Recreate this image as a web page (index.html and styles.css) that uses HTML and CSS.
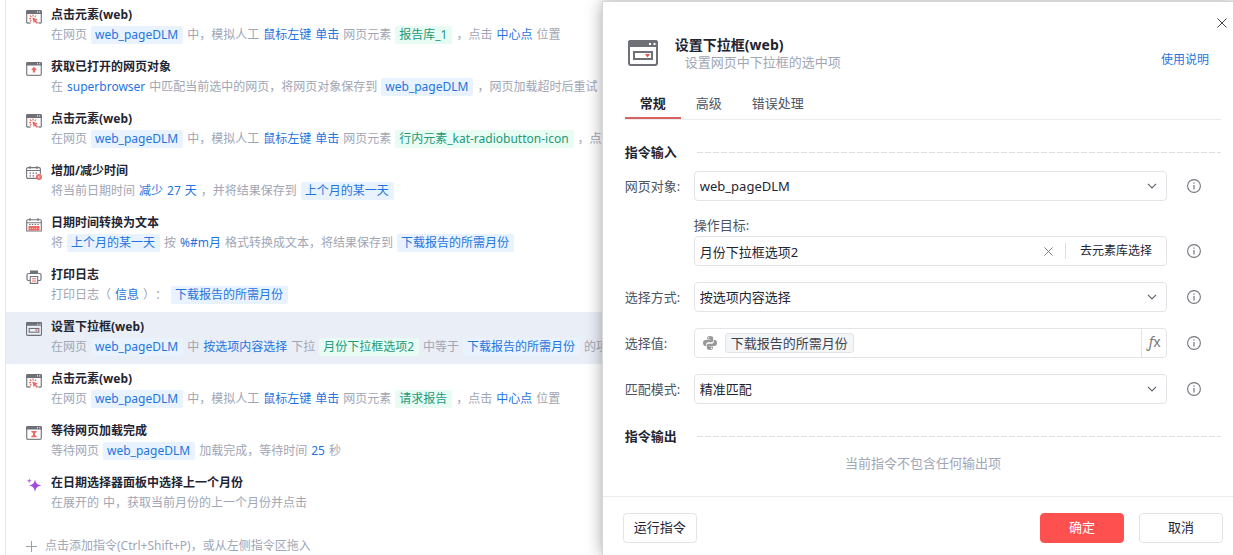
FILE: index.html
```
<!DOCTYPE html>
<html lang="zh-CN">
<head>
    <meta charset="UTF-8">
    <meta name="viewport" content="width=device-width, initial-scale=1.0">
    <title>设置下拉框(web)</title>
    <link rel="stylesheet" href="styles.css">
</head>
<body>

    <!-- 图标 -->
    <svg class="sprite" aria-hidden="true">
        <symbol id="i-click" viewBox="0 0 16 14">
            <path d="M.7 13V1.7a1 1 0 0 1 1-1h12.6a1 1 0 0 1 1 1V13M.7 13h3.8M12.5 13h2.8" fill="none" stroke="#85858c" stroke-width="1.3"/>
            <path d="M0 4V1.5A1.5 1.5 0 0 1 1.5 0h13A1.5 1.5 0 0 1 16 1.5V4z" fill="#6f6f77"/>
            <path d="M11 1.3h1v1.2h-1zM13.2 1.3h1v1.2h-1z" fill="#fff"/>
            <path d="M7 4.5v2M4 5.5l1.4 1.5M3 8.7h2M4 11.5l1.3-1.3M10 5.5L8.8 7" fill="none" stroke="#ec6a66" stroke-width="1.2"/>
            <path d="M6.3 7.5l5.6 2-2 1 2.2 2.3-1.2 1.1-2.1-2.3-1 1.9z" fill="#ec6a66"/>
        </symbol>
        <symbol id="i-fetch" viewBox="0 0 16 14">
            <rect x=".7" y=".7" width="14.6" height="12.6" rx="1.2" fill="#fff" stroke="#85858c" stroke-width="1.3"/>
            <path d="M0 3.5v-2A1.5 1.5 0 0 1 1.5 0h13A1.5 1.5 0 0 1 16 1.5v2z" fill="#6f6f77"/>
            <path d="M11 1.2h1v1.1h-1zM13.2 1.2h1v1.1h-1z" fill="#fff"/>
            <path d="M8 4.8l3 3.2H9.2v2.5H6.8V8H5z" fill="#ec6a66"/>
        </symbol>
        <symbol id="i-wait" viewBox="0 0 16 14">
            <rect x=".7" y=".7" width="14.6" height="12.6" rx="1.2" fill="#fff" stroke="#85858c" stroke-width="1.3"/>
            <path d="M0 3.5v-2A1.5 1.5 0 0 1 1.5 0h13A1.5 1.5 0 0 1 16 1.5v2z" fill="#6f6f77"/>
            <path d="M11 1.2h1v1.1h-1zM13.2 1.2h1v1.1h-1z" fill="#fff"/>
            <path d="M5.3 5h5.4v1.2H9.8L8.8 8l1 2h.9v1.3H5.3V10h.9l1-2-1-1.8h-.9z" fill="#ec6a66"/>
        </symbol>
        <symbol id="i-select" viewBox="0 0 30 26">
            <rect x="1" y="1" width="28" height="24" rx="2" fill="none" stroke="#6f6f77" stroke-width="2"/>
            <path d="M0 7V2.5A2.5 2.5 0 0 1 2.5 0h25A2.5 2.5 0 0 1 30 2.5V7z" fill="#6f6f77"/>
            <path d="M21 3h2v2h-2zM25.5 3h2v2h-2z" fill="#fff"/>
            <rect x="6" y="12" width="18" height="7" fill="none" stroke="#6f6f77" stroke-width="2"/>
            <path d="M17 14h5l-2.5 3.500z" fill="#e05555"/>
        </symbol>
        <symbol id="i-date-add" viewBox="0 0 16 14">
            <path d="M11 12.4H2A1.4 1.4 0 0 1 .6 11V3A1.4 1.4 0 0 1 2 1.6h11A1.4 1.4 0 0 1 14.4 3v5M.6 4.5h13.800M4 0v3M11 0v3" fill="none" stroke="#75757c" stroke-width="1.1"/>
            <path d="M3.5 7.200H12M3.500 9.800h6" stroke="#75757c" stroke-width="1.3" stroke-dasharray="1.5 1.5"/>
            <circle cx="13" cy="11" r="3" fill="#ec6a66"/>
            <path d="M11.5 11h3M13 9.500v3" stroke="#fbc8c6" stroke-width=".8"/>
        </symbol>
        <symbol id="i-date-text" viewBox="0 0 16 14">
            <path d="M.7 13V2.8a1 1 0 0 1 1-1h12.6a1 1 0 0 1 1 1V13zM.7 4.800h14.600M4 0v3M12 0v3" fill="none" stroke="#75757c" stroke-width="1.1"/>
            <path d="M3 6.500h10" stroke="#75757c" stroke-width="1.2" stroke-dasharray="1.5 1.3"/>
            <path d="M2.500 8h11v4.500h-11z" fill="#ec6a66"/>
            <path d="M4 10.500h8" stroke="#f9bcba" stroke-width="1" stroke-dasharray="1 1"/>
        </symbol>
        <symbol id="i-print" viewBox="0 0 16 14">
            <path d="M4 3.500V.5h8v3z" fill="#6f6f77"/>
            <path d="M4 10.500H2.500A1.500 1.500 0 0 1 1 9V5a1.500 1.500 0 0 1 1.500-1.500h11A1.500 1.500 0 0 1 15 5v4a1.500 1.500 0 0 1-1.500 1.500H12" fill="none" stroke="#75757c" stroke-width="1.2"/>
            <path d="M4.300 6.500h7.400v6.900H4.300z" fill="#fff" stroke="#75757c" stroke-width="1.1"/>
            <path d="M6 8.800h4M6 11h4" stroke="#ec6a66"/>
        </symbol>
        <symbol id="i-magic" viewBox="0 0 16 14">
            <path d="M9 1.200c.8 4.300 2.300 5.300 6.500 6.200-4.300.9-5.700 2.300-6.500 6.600-.7-4.300-2-5.700-6-6.600 4-.9 5.300-2 6-6.200z" fill="#a548e0"/>
            <path d="M3.300 0c.3 2 .8 2.500 2.700 2.800-1.900.3-2.400.8-2.700 2.800C3 3.600 2.500 3.100.6 2.800 2.500 2.500 3 2 3.300 0z" fill="#b565e5"/>
        </symbol>
        <symbol id="i-info" viewBox="0 0 14 14">
            <circle cx="7" cy="7" r="6.400" fill="none" stroke="#73767d" stroke-width="1.1"/>
            <path d="M7 6v4.500M7 3.500v1.200" stroke="#73767d" stroke-width="1.2"/>
        </symbol>
        <symbol id="i-down" viewBox="0 0 10 6">
            <path d="M1 .8l4 4 4-4" fill="none" stroke="#5d6470" stroke-width="1.2"/>
        </symbol>
        <symbol id="i-close" viewBox="0 0 10 10">
            <path d="M.5.5l9 9M9.500.5l-9 9" stroke="currentColor" stroke-width="1"/>
        </symbol>
        <symbol id="i-plus" viewBox="0 0 11 11">
            <path d="M5.500 0v11M0 5.500h11" stroke="#9aa0ae"/>
        </symbol>
        <symbol id="i-python" viewBox="0 0 14 14">
            <path id="py" d="M7 0C4.800 0 4 .8 4 2v1.500h3.300v.6H2.200C.8 4.100 0 5.200 0 7s.8 2.900 2 2.900h1.200V8.300c0-1.200 1-2 2.100-2h3.200c1 0 1.700-.8 1.700-1.700V2C10.200.8 9.200 0 7 0zM5.400 1.100a.7.7 0 1 1 0 1.400.7.7 0 0 1 0-1.400z" fill="#999"/>
            <use href="#py" transform="rotate(180 7 7)"/>
        </symbol>
    </svg>

    <div class="app">
        <!-- 指令列表 -->
        <main class="flow">
            <div class="step">
                <svg class="step-icon"><use href="#i-click"/></svg>
                <div class="step-title">点击元素(web)</div>
                <div class="step-desc"><span>在网页</span><span class="var">web_pageDLM</span><span>中，模拟人工</span><span class="param">鼠标左键</span><span class="param">单击</span><span>网页元素</span><span class="element">报告库_1</span><span>，点击</span><span class="param">中心点</span><span>位置</span></div>
            </div>
            <div class="step">
                <svg class="step-icon"><use href="#i-fetch"/></svg>
                <div class="step-title">获取已打开的网页对象</div>
                <div class="step-desc"><span>在</span><span class="param">superbrowser</span><span>中匹配当前选中的网页，将网页对象保存到</span><span class="var">web_pageDLM</span><span>，网页加载超时后重试</span></div>
            </div>
            <div class="step">
                <svg class="step-icon"><use href="#i-click"/></svg>
                <div class="step-title">点击元素(web)</div>
                <div class="step-desc"><span>在网页</span><span class="var">web_pageDLM</span><span>中，模拟人工</span><span class="param">鼠标左键</span><span class="param">单击</span><span>网页元素</span><span class="element">行内元素_kat-radiobutton-icon</span><span>，点击</span></div>
            </div>
            <div class="step">
                <svg class="step-icon"><use href="#i-date-add"/></svg>
                <div class="step-title">增加/减少时间</div>
                <div class="step-desc"><span>将当前日期时间</span><span class="param">减少</span><span class="param">27</span><span class="param">天</span><span>，并将结果保存到</span><span class="var">上个月的某一天</span></div>
            </div>
            <div class="step">
                <svg class="step-icon"><use href="#i-date-text"/></svg>
                <div class="step-title">日期时间转换为文本</div>
                <div class="step-desc"><span>将</span><span class="var">上个月的某一天</span><span>按</span><span class="param">%#m月</span><span>格式转换成文本，将结果保存到</span><span class="var">下载报告的所需月份</span></div>
            </div>
            <div class="step">
                <svg class="step-icon"><use href="#i-print"/></svg>
                <div class="step-title">打印日志</div>
                <div class="step-desc"><span>打印日志（</span><span class="param">信息</span><span>）：</span><span class="var">下载报告的所需月份</span></div>
            </div>
            <div class="step active">
                <svg class="step-icon"><use href="#i-select"/></svg>
                <div class="step-title">设置下拉框(web)</div>
                <div class="step-desc"><span>在网页</span><span class="var">web_pageDLM</span><span>中</span><span class="param">按选项内容选择</span><span>下拉</span><span class="element">月份下拉框选项2</span><span>中等于</span><span class="var">下载报告的所需月份</span><span>的项</span></div>
            </div>
            <div class="step">
                <svg class="step-icon"><use href="#i-click"/></svg>
                <div class="step-title">点击元素(web)</div>
                <div class="step-desc"><span>在网页</span><span class="var">web_pageDLM</span><span>中，模拟人工</span><span class="param">鼠标左键</span><span class="param">单击</span><span>网页元素</span><span class="element">请求报告</span><span>，点击</span><span class="param">中心点</span><span>位置</span></div>
            </div>
            <div class="step">
                <svg class="step-icon"><use href="#i-wait"/></svg>
                <div class="step-title">等待网页加载完成</div>
                <div class="step-desc"><span>等待网页</span><span class="var">web_pageDLM</span><span>加载完成，等待时间</span><span class="param">25</span><span>秒</span></div>
            </div>
            <div class="step">
                <svg class="step-icon"><use href="#i-magic"/></svg>
                <div class="step-title">在日期选择器面板中选择上一个月份</div>
                <div class="step-desc"><span>在展开的</span><span>中，获取当前月份的上一个月份并点击</span></div>
            </div>
            <button class="add-step" type="button"><svg class="plus"><use href="#i-plus"/></svg>点击添加指令(Ctrl+Shift+P)，或从左侧指令区拖入</button>
        </main>

        <!-- 指令设置 -->
        <section class="dialog" role="dialog" aria-labelledby="dialog-title">
            <button class="close" type="button" aria-label="关闭"><svg><use href="#i-close"/></svg></button>
            <header class="dialog-header">
                <svg class="dialog-icon"><use href="#i-select"/></svg>
                <div class="dialog-heading">
                    <h1 id="dialog-title">设置下拉框(web)</h1>
                    <p>设置网页中下拉框的选中项</p>
                </div>
                <a class="help" href="#">使用说明</a>
            </header>

            <nav class="tabs">
                <button class="tab selected" type="button">常规</button>
                <button class="tab" type="button">高级</button>
                <button class="tab" type="button">错误处理</button>
            </nav>

            <form class="form" id="form">
                <h2>指令输入</h2>
                <div class="field">
                    <label class="label" for="page">网页对象:</label>
                    <div class="select">
                        <select id="page"><option>web_pageDLM</option></select>
                        <svg class="arrow"><use href="#i-down"/></svg>
                    </div>
                    <svg class="info"><use href="#i-info"/></svg>
                </div>
                <div class="field target">
                    <label class="top-label" for="target">操作目标:</label>
                    <div class="box">
                        <input type="text" id="target" value="月份下拉框选项2">
                        <button class="clear" type="button" aria-label="清除"><svg><use href="#i-close"/></svg></button>
                        <button class="pick" type="button">去元素库选择</button>
                    </div>
                    <svg class="info"><use href="#i-info"/></svg>
                </div>
                <div class="field">
                    <label class="label" for="method">选择方式:</label>
                    <div class="select">
                        <select id="method"><option>按选项内容选择</option></select>
                        <svg class="arrow"><use href="#i-down"/></svg>
                    </div>
                    <svg class="info"><use href="#i-info"/></svg>
                </div>
                <div class="field">
                    <label class="label" for="value">选择值:</label>
                    <div class="box">
                        <svg class="python"><use href="#i-python"/></svg>
                        <span class="tag">下载报告的所需月份</span>
                        <input type="text" id="value">
                        <button class="fx" type="button"><i>ƒ</i>x</button>
                    </div>
                    <svg class="info"><use href="#i-info"/></svg>
                </div>
                <div class="field">
                    <label class="label" for="match">匹配模式:</label>
                    <div class="select">
                        <select id="match"><option>精准匹配</option></select>
                        <svg class="arrow"><use href="#i-down"/></svg>
                    </div>
                    <svg class="info"><use href="#i-info"/></svg>
                </div>
                <div class="output">
                    <h2>指令输出</h2>
                    <p class="empty">当前指令不包含任何输出项</p>
                </div>
            </form>

            <footer class="dialog-footer">
                <button class="button run" type="button">运行指令</button>
                <button class="button primary" type="submit" form="form">确定</button>
                <button class="button" type="button">取消</button>
            </footer>
        </section>
    </div>

</body>
</html>
```
FILE: styles.css
```
* {
    box-sizing: border-box;
}
body {
    margin: 0;
    font-family: "Noto Sans", "Noto Sans CJK SC", sans-serif;
    font-size: 13px;
    text-spacing-trim: space-all;
    color: #1f2532;
    background-color: #fff;
}
button, input, select {
    font: inherit;
    color: inherit;
    margin: 0;
    padding: 0;
    border: none;
    background: none;
}
button {
    cursor: pointer;
}
h1, h2, p {
    margin: 0;
}
svg {
    display: block;
    flex: none;
}
.sprite {
    display: none;
}
.app {
    display: grid;
    grid-template-columns: minmax(0, 22fr) minmax(0, 23fr);
    height: 100vh;
    overflow: hidden;
}

/* 指令列表 */
.flow {
    margin-left: 5px;
    border-left: 1px solid #e6e6e9;
    font-size: 12px;
    overflow: hidden;
}
.step {
    display: grid;
    grid-template-columns: 16px minmax(0, 1fr);
    column-gap: 9px;
    row-gap: 1px;
    padding: 5px 0 8px 20px;
}
.step.active {
    background-color: #eaeef6;
}
.step-icon {
    grid-row: span 2;
    width: 16px;
    height: 14px;
    margin-top: 5px;
}
.step-title {
    line-height: 20px;
    font-weight: bold;
}
.step-desc {
    display: flex;
    gap: 4px;
    line-height: 18px;
    color: #a1a6b4;
    white-space: nowrap;
    overflow: hidden;
}
.step-desc span {
    flex: none;
}
.step-desc .var, .step-desc .element {
    padding: 0 5px 0 4px;
    border-radius: 2px;
}
.step-desc .var {
    color: #1f74de;
    background-color: #e8f3ff;
}
.step-desc .element {
    color: #23997a;
    background-color: #e8fcf4;
}
.step-desc .param {
    color: #1f74de;
}
.add-step {
    display: flex;
    align-items: center;
    gap: 8px;
    padding: 16px 0 0 20px;
    line-height: 20px;
    color: #a1a6b4;
}
.plus {
    width: 11px;
    height: 11px;
}

/* 设置面板 */
.dialog {
    position: relative;
    display: flex;
    flex-direction: column;
    margin-top: 2px;
    background-color: #fff;
    box-shadow: 0 0 1px 1px #d6d6d6, 0 0 16px rgba(0, 0, 0, 0.4);
}
.close {
    position: absolute;
    top: 13px;
    right: 3px;
    padding: 3px;
    color: #444;
}
.close svg {
    width: 10px;
    height: 10px;
}
.dialog-header {
    display: flex;
    align-items: center;
    padding: 33px 24px 0 25px;
}
.dialog-icon {
    width: 30px;
    height: 26px;
}
.dialog-heading {
    flex: 1;
    padding-left: 17px;
}
.dialog-heading h1 {
    font-size: 14px;
    line-height: 20px;
}
.dialog-heading p {
    padding-left: 10px;
    line-height: 15px;
    color: #a1a6b4;
}
.help {
    padding-top: 14px;
    font-size: 12px;
    line-height: 18px;
    color: #1f74de;
    text-decoration: none;
}
.tabs {
    display: flex;
    margin: 17px 12px 0 22px;
    border-bottom: 1px solid #ebebed;
}
.tab {
    height: 32px;
    padding: 0 15px;
    color: #4e5562;
    border-bottom: 2px solid transparent;
}
.tab.selected {
    font-weight: bold;
    color: #1f2532;
    border-color: #d9605f;
}
.form {
    display: flex;
    flex-direction: column;
    gap: 16px;
    padding: 22px 12px 0 22px;
}
.form h2 {
    display: flex;
    align-items: center;
    gap: 20px;
    margin-bottom: -7px;
    font-size: 13px;
    line-height: 20px;
}
.form h2::after {
    content: "";
    flex: 1;
    height: 1px;
    background: repeating-linear-gradient(90deg, #dedfe2 0 6px, transparent 6px 8px);
}
.field {
    display: grid;
    grid-template-columns: 69px minmax(0, 1fr) 14px;
    align-items: center;
    padding-right: 20px;
}
.label, .top-label {
    padding-bottom: 2px;
    color: #4e5562;
}
.top-label {
    grid-column: 2 / 4;
    line-height: 17px;
}
.target .box {
    grid-column: 2;
}
.info {
    width: 14px;
    height: 14px;
}
.select, .box {
    height: 30px;
    margin-right: 20px;
    border: 1px solid #e3e4e7;
    border-radius: 4px;
}
.select {
    position: relative;
}
.select select {
    appearance: none;
    width: 100%;
    height: 100%;
    padding: 0 30px 0 5px;
}
.arrow {
    position: absolute;
    top: 11px;
    right: 9px;
    width: 10px;
    height: 6px;
    pointer-events: none;
}
.box {
    display: flex;
    align-items: center;
}
.box input {
    flex: 1;
    min-width: 0;
    height: 100%;
    padding: 0 5px;
}
.clear {
    padding: 4px 12px;
    color: #777;
}
.clear svg {
    width: 9px;
    height: 9px;
}
.pick {
    height: 16px;
    padding: 0 14px;
    border-left: 1px solid #dedfe2;
    font-size: 12px;
    line-height: 16px;
}
.python {
    width: 14px;
    height: 14px;
    margin: 0 8px;
}
.tag {
    padding: 0 5px;
    border: 1px solid #e3e4e7;
    border-radius: 3px;
    line-height: 18px;
    background-color: #f4f5f7;
    color: #3c4350;
}
.fx {
    width: 25px;
    height: 100%;
    padding-bottom: 3px;
    border-left: 1px solid #e3e4e7;
    font-size: 14px;
    color: #777;
}
.output {
    padding-top: 6px;
}
.output h2 {
    margin-bottom: 7px;
}
.empty {
    line-height: 20px;
    text-align: center;
    color: #a1a6b4;
}
.dialog-footer {
    display: flex;
    gap: 15px;
    margin-top: auto;
    padding: 16px 10px 12px 20px;
    border-top: 1px solid #ebebed;
}
.button {
    width: 84px;
    height: 30px;
    padding-bottom: 3px;
    border: 1px solid #e3e4e7;
    border-radius: 4px;
}
.button.run {
    width: 74px;
    margin-right: auto;
}
.button.primary {
    color: #fff;
    border-color: #ff5050;
    background-color: #ff5050;
}
```
